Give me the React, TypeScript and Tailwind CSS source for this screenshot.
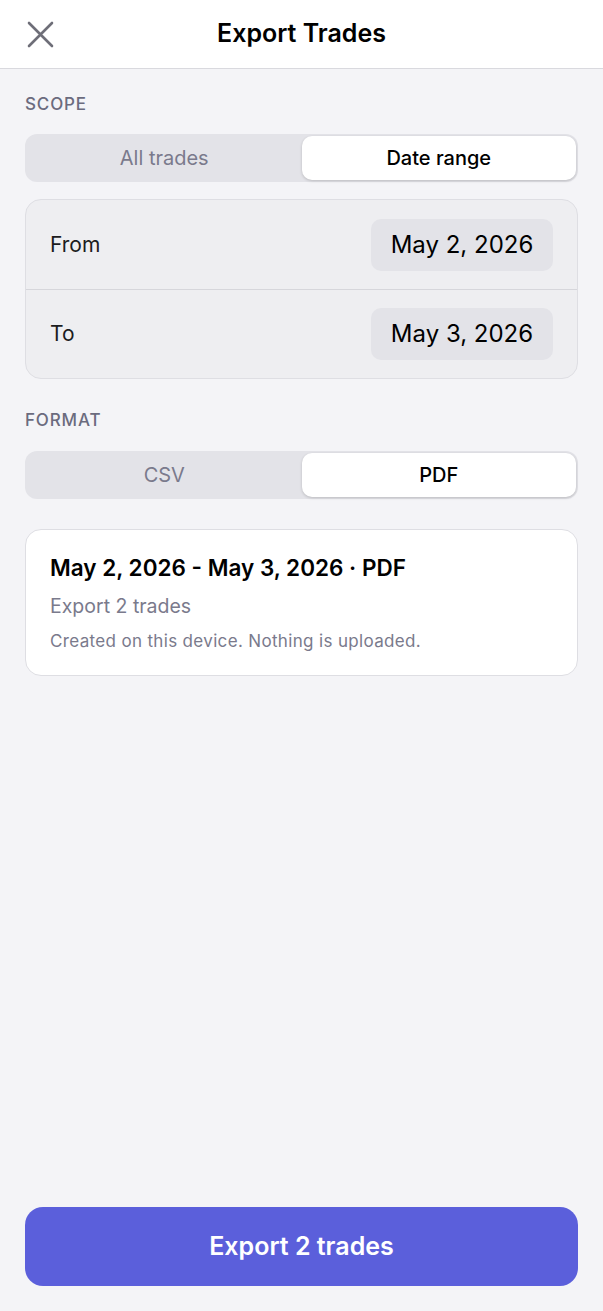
function Segmented({ options, selected }: { options: string[]; selected: number }) {
  return (
    <div className="flex h-12 rounded-xl bg-[#e3e3e8] p-[2px]">
      {options.map((o, i) => (
        <div
          key={o}
          className={
            i === selected
              ? 'flex-1 flex items-center justify-center rounded-[10px] bg-white text-[20px] font-medium text-black shadow-[0_1px_3px_rgba(0,0,0,0.18)]'
              : 'flex-1 flex items-center justify-center text-[20px] text-[#7a7a8c]'
          }
        >
          {o}
        </div>
      ))}
    </div>
  )
}

function DateRow({ label, value, tall }: { label: string; value: string; tall?: boolean }) {
  return (
    <div className={`flex items-center justify-between px-6 ${tall ? 'h-[89px]' : 'h-[88px]'}`}>
      <span className="text-[21px] text-[#1c1c1e]">{label}</span>
      <span className="flex h-[52px] w-[182px] items-center justify-center rounded-[10px] bg-[#e3e3e8] text-[24px] text-black">
        {value}
      </span>
    </div>
  )
}

export default function App() {
  return (
    <main
      className="flex min-h-[1311px] w-full flex-col bg-[#f4f4f7]"
      style={{ fontFamily: 'Inter, "Noto Sans", sans-serif' }}
    >
      <header className="relative flex h-[69px] items-center justify-center border-b border-[#d9d9de] bg-white">
        <button className="absolute left-[27px] top-[21px]">
          <svg width="27" height="27" viewBox="0 0 27 27" fill="none" stroke="#6e6e78" strokeWidth="2.6" strokeLinecap="round">
            <path d="M2 2L25 25M25 2L2 25" />
          </svg>
        </button>
        <h1 className="text-[25px] font-semibold text-black">Export Trades</h1>
      </header>

      <div className="flex flex-col px-[25px]">
        <span className="mt-[23px] text-[17px] leading-[24px] font-medium tracking-wider text-[#6b6b7e]">SCOPE</span>
        <div className="mt-[18px]">
          <Segmented options={['All trades', 'Date range']} selected={1} />
        </div>

        <div className="mt-[17px] rounded-2xl border border-[#dedee3] bg-[#eeeef1]">
          <DateRow label="From" value="May 2, 2026" tall />
          <div className="h-px bg-[#d6d6db]" />
          <DateRow label="To" value="May 3, 2026" />
        </div>

        <span className="mt-[29px] text-[17px] leading-[24px] font-medium tracking-wider text-[#6b6b7e]">FORMAT</span>
        <div className="mt-[19px]">
          <Segmented options={['CSV', 'PDF']} selected={1} />
        </div>

        <div className="mt-[30px] flex flex-col rounded-2xl border border-[#dedee3] bg-white px-6 pb-[23px] pt-[24px]">
          <span className="text-[22.5px] leading-[28px] font-semibold text-black">May 2, 2026 - May 3, 2026 · PDF</span>
          <span className="mt-[12px] text-[19.5px] leading-[24px] text-[#7a7a8c]">Export 2 trades</span>
          <span className="mt-[12px] text-[17px] leading-[22px] tracking-[0.02em] text-[#7a7a8c]">
            Created on this device. Nothing is uploaded.
          </span>
        </div>
      </div>

      <div className="mt-auto px-[25px] pb-[25px]">
        <button className="flex h-[79px] w-full items-center justify-center rounded-[18px] bg-[#5b5fdb] text-[25px] font-semibold text-white">
          Export 2 trades
        </button>
      </div>
    </main>
  )
}
